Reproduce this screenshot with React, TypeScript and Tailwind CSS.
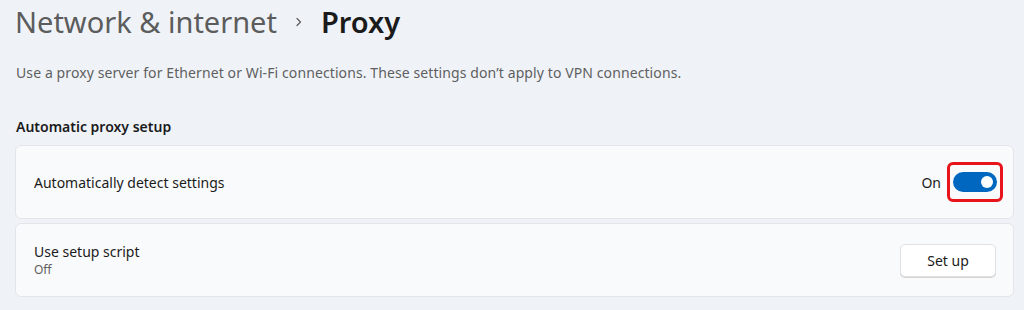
import React from 'react'

function Toggle() {
  return (
    <div className="rounded-[6px] border-[3px] border-[#e8141b] px-[3px] py-[7px]">
      <div className="flex h-[20px] w-[44px] items-center justify-end rounded-full bg-[#0067c0] pr-[4px]">
        <div className="h-[12px] w-[12px] rounded-full bg-white" />
      </div>
    </div>
  )
}

export default function App() {
  return (
    <div
      className="h-[310px] w-[1024px] overflow-hidden bg-[#eff3f8] pl-[15px] pr-[10px] text-[#1b1b1b]"
      style={{ fontFamily: '"Noto Sans", "Open Sans", sans-serif' }}
    >
      <div className="flex items-center pt-[2px] text-[29px] leading-[40px]">
        <span className="text-[#5c5c5c]">Network &amp; internet</span>
        <svg className="mx-[16px] h-[12px] w-[12px]" viewBox="0 0 12 12" fill="none">
          <path d="M4 2.5 L7.5 6 L4 9.5" stroke="#5c5c5c" strokeWidth="1.2" strokeLinecap="round" strokeLinejoin="round" />
        </svg>
        <span className="font-semibold text-[#1b1b1b]">Proxy</span>
      </div>

      <p className="mt-[21px] pl-[1px] text-[14px] leading-[20px] tracking-[0.1px] text-[#5f5f5f]">
        Use a proxy server for Ethernet or Wi-Fi connections. These settings don’t apply to VPN connections.
      </p>

      <h2 className="mt-[34px] pl-[1px] text-[14px] font-semibold leading-[20px]">Automatic proxy setup</h2>

      <div className="mt-[8px] flex flex-col gap-[4px]">
        <div className="flex h-[74px] items-center justify-between rounded-[6px] border border-[#e3e5e9] bg-[#f9fafc] pl-[18px] pr-[10px]">
          <span className="text-[14px]">Automatically detect settings</span>
          <div className="flex items-center gap-[6px]">
            <span className="text-[14px]">On</span>
            <Toggle />
          </div>
        </div>

        <div className="flex h-[74px] items-center justify-between rounded-[6px] border border-[#e3e5e9] bg-[#f9fafc] pl-[18px] pr-[17px]">
          <div className="flex flex-col">
            <span className="text-[14px] leading-[20px]">Use setup script</span>
            <span className="text-[12px] leading-[16px] text-[#5f5f5f]">Off</span>
          </div>
          <button className="h-[33px] w-[96px] rounded-[5px] border border-[#e1e1e1] bg-white text-[14px] shadow-[0_1px_0_#d4d4d4]">
            Set up
          </button>
        </div>
      </div>
    </div>
  )
}
